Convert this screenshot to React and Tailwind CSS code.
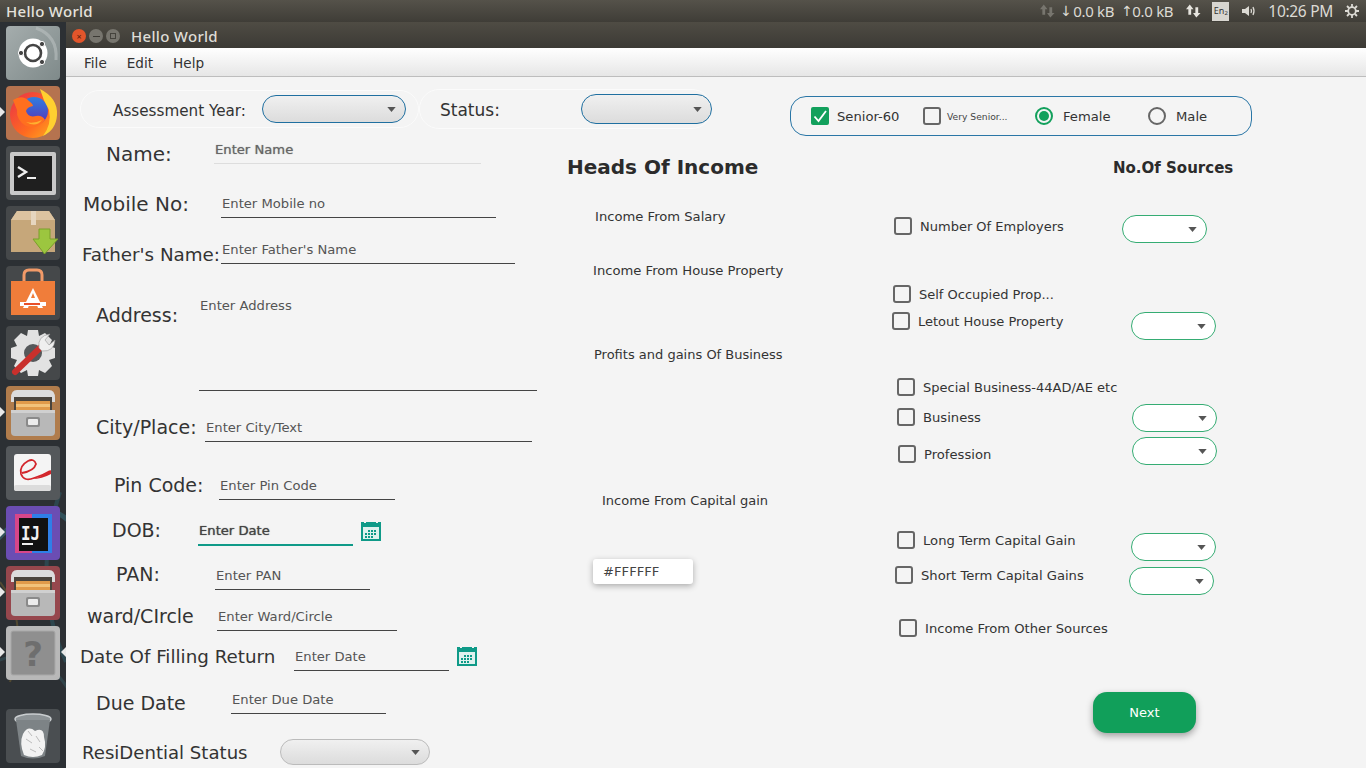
import React from 'react';

const SANS = "font-['DejaVu_Sans',sans-serif]";

function Tile({ bg, arrow, arrowRight, className = '', children }) {
  return (
    <div className={`relative w-[54px] h-[54px] ml-[6px] rounded-[4px] shrink-0 ${bg} ${className}`}>
      {arrow && <span className="absolute left-[-6px] top-[21px] border-y-[5px] border-y-transparent border-l-[5px] border-l-[#e8e8e8]" />}
      {arrowRight && <span className="absolute right-[-6px] top-[21px] border-y-[5px] border-y-transparent border-r-[5px] border-r-[#e8e8e8]" />}
      <svg viewBox="0 0 54 54" className="w-[54px] h-[54px]">{children}</svg>
    </div>
  );
}

function FilesIcon() {
  return (
    <g>
      <path d="M5 12 Q5 4 11 4 H43 Q49 4 49 12 V16 H5Z" fill="#dcdcdc" />
      <rect x="8" y="11" width="38" height="13" fill="#4a443c" />
      <rect x="10" y="15" width="34" height="9" fill="#e09a4a" />
      <rect x="10" y="18" width="34" height="3" fill="#f2c27a" />
      <path d="M5 24 H49 V46 Q49 50 45 50 H9 Q5 50 5 46Z" fill="#b8b8b8" />
      <rect x="5" y="24" width="44" height="3" fill="#d0d0d0" />
      <rect x="20" y="31" width="14" height="10" rx="2" fill="#8a8a8a" />
      <rect x="22" y="33" width="10" height="6" rx="1" fill="#ececec" />
    </g>
  );
}

function Launcher() {
  return (
    <div className="relative w-[66px] shrink-0 flex flex-col gap-[6px] pt-[4px] bg-[#2c3034] overflow-hidden">
      <svg viewBox="0 0 66 746" className="absolute inset-0 w-[66px] h-[746px]" fill="none">
        <path d="M-5 520 Q40 470 70 500" stroke="#35606b" strokeWidth="5" opacity="0.7" />
        <path d="M0 560 Q30 600 10 660" stroke="#6a5a30" strokeWidth="2" opacity="0.6" />
        <path d="M60 470 Q30 560 66 640" stroke="#2f5560" strokeWidth="4" opacity="0.6" />
        <path d="M-5 640 Q40 620 70 670" stroke="#35525a" strokeWidth="3" opacity="0.6" />
      </svg>
      <Tile bg="bg-gradient-to-br from-[#a5adad] to-[#7f8a8a]">
        <path d="M30 2 Q52 10 50 34" fill="none" stroke="#b9c0c0" strokeWidth="3" opacity="0.6" />
        <circle cx="27" cy="27" r="14.5" fill="#fff" />
        <circle cx="27" cy="27" r="8" fill="none" stroke="#444" strokeWidth="2.6" />
        <circle cx="36" cy="18" r="2.6" fill="#444" stroke="#fff" />
        <circle cx="36" cy="36" r="2.6" fill="#444" stroke="#fff" />
        <circle cx="15" cy="27" r="2.6" fill="#444" stroke="#fff" />
      </Tile>
      <Tile bg="bg-[#b5734f]" arrow>
        <defs>
          <linearGradient id="foxBall" x1="0" y1="0" x2="1" y2="1">
            <stop offset="0" stopColor="#e8304a" />
            <stop offset="0.6" stopColor="#ff6a20" />
            <stop offset="1" stopColor="#ffb020" />
          </linearGradient>
          <linearGradient id="foxGlobe" x1="0" y1="0" x2="0" y2="1">
            <stop offset="0" stopColor="#2f7fe0" />
            <stop offset="1" stopColor="#5a2fb5" />
          </linearGradient>
        </defs>
        <circle cx="27" cy="29" r="23" fill="url(#foxBall)" />
        <circle cx="28" cy="25" r="14" fill="url(#foxGlobe)" />
        <path d="M34 3 Q52 12 51 29 Q50 44 37 50 Q46 38 43 24 Q37 14 34 3Z" fill="#ffd030" />
        <path d="M7 14 Q16 8 23 15 Q27 18 27 20 Q21 21 20 25 Q22 32 30 30 Q36 29 39 34 Q31 44 20 40 Q10 34 11 24Z" fill="#ff6f1f" />
        <path d="M20 36 Q28 38 36 34 Q30 42 20 36Z" fill="#ffb030" />
      </Tile>
      <Tile bg="bg-[#4a4d4f]">
        <rect x="4" y="6" width="46" height="43" rx="2" fill="#c9c9c9" />
        <rect x="8" y="10" width="38" height="35" fill="#1f1f1f" />
        <path d="M12 21 L20 26 L12 31" fill="none" stroke="#eee" strokeWidth="2.4" />
        <rect x="21" y="31" width="9" height="2" fill="#eee" />
      </Tile>
      <Tile bg="bg-[#45484a]">
        <path d="M5 14 L11 5 H43 L49 14 V46 H5Z" fill="#c6a77a" />
        <path d="M5 14 L11 5 H43 L49 14Z" fill="#dcc3a0" />
        <rect x="25" y="5" width="5" height="14" fill="#e6d6bf" />
        <path d="M33 23 H44 V33 H52 L38.5 48 L27 33 H33Z" fill="#9cc63f" stroke="#7a9f2a" />
      </Tile>
      <Tile bg="bg-[#45484a]">
        <path d="M5 15 H49 V49 H5Z" fill="#f07d3a" />
        <path d="M18 15 V9 Q18 4 23 4 H31 Q36 4 36 9 V15" fill="none" stroke="#f29a68" strokeWidth="3" />
        <path d="M27 22 L37 42 H32 L30 36 H24 L22 42 H17Z M27 27 L25 32 H29Z" fill="#fff" fillRule="evenodd" />
        <rect x="14" y="36" width="26" height="4" fill="#fff" />
        <rect x="18" y="37" width="16" height="2" fill="#e8502a" />
      </Tile>
      <Tile bg="bg-[#45484a]">
        <path d="M22 4 H32 L33 10 L39 7 L46 14 L43 20 L49 22 V32 L43 34 L46 40 L39 47 L33 44 L32 50 H22 L21 44 L15 47 L8 40 L11 34 L5 32 V22 L11 20 L8 14 L15 7 L21 10Z" fill="#e2e2e2" />
        <circle cx="27" cy="27" r="9" fill="#55585a" />
        <path d="M9 46 L36 20" stroke="#c9302c" strokeWidth="6" strokeLinecap="round" />
        <path d="M33 22 Q31 10 44 8 L39 14 L43 19 L49 14 Q48 26 36 25Z" fill="#efefef" stroke="#999" strokeWidth="0.6" />
      </Tile>
      <Tile bg="bg-[#b07c4c]" arrow><FilesIcon /></Tile>
      <Tile bg="bg-[#54585b]">
        <rect x="8" y="8" width="37" height="37" rx="3" fill="#f4f4f4" />
        <rect x="8" y="39" width="37" height="6" rx="2" fill="#dcdcdc" />
        <path d="M16 27 Q28 25 30 18 Q28 12 22 15 Q13 20 15 28 Q18 36 28 32 Q36 30 44 25" fill="none" stroke="#d3262c" strokeWidth="1.8" />
        <path d="M26 33 Q36 31 45 24 V28 Q36 33 26 33Z" fill="#d3262c" />
      </Tile>
      <Tile bg="bg-[#6b4db3]" arrow>
        <path d="M9 8 H44 V47 H9Z" fill="#d8468a" />
        <path d="M26 8 H46 V47 H26Z" fill="#2f7fe8" />
        <rect x="13" y="12" width="29" height="33" fill="#111" />
        <rect x="16" y="37" width="11" height="2" fill="#eee" />
        <text x="15" y="34" fontSize="20" textLength="19" lengthAdjust="spacingAndGlyphs" fontWeight="700" fill="#f2f2f2" fontFamily="DejaVu Sans Mono, monospace">IJ</text>
      </Tile>
      <Tile bg="bg-[#96474d]" arrow><FilesIcon /></Tile>
      <Tile bg="bg-[#b8b8b8]" arrow arrowRight>
        <rect x="5" y="5" width="44" height="44" rx="2" fill="#8f8f8f" stroke="#a8a8a8" />
        <text x="27" y="40" textAnchor="middle" fontSize="34" fontWeight="700" fill="#6e6e6e" fontFamily="DejaVu Sans, sans-serif">?</text>
      </Tile>
      <Tile bg="bg-[#4a4e51]" className="mt-[23px]">
        <ellipse cx="27" cy="10" rx="18" ry="5" fill="#8d9396" stroke="#c9cdcf" strokeWidth="1.5" />
        <path d="M10 11 L15 47 Q27 52 39 47 L44 11" fill="#7d8386" />
        <path d="M17 25 Q22 16 29 22 Q38 18 38 28 Q41 38 36 46 Q27 50 18 46 Q13 34 17 25Z" fill="#f2f2f2" />
        <path d="M20 30 L26 34 M30 27 L34 33 M24 40 L30 43 M22 22 L26 27 M33 38 L37 42" stroke="#bbb" />
      </Tile>
    </div>
  );
}

function Caret({ className = '' }) {
  return (
    <svg viewBox="0 0 10 6" className={`w-[9px] h-[5px] ${className}`}>
      <polygon points="0,0 10,0 5,6" fill="#555" />
    </svg>
  );
}

function Select({ className }) {
  return <div className={`flex items-center justify-end shrink-0 rounded-full border pr-[9px] ${className}`}><Caret /></div>;
}

function GreenSelect({ className = '' }) {
  return <Select className={`w-[85px] h-[28px] bg-white border-[#35ac73] ${className}`} />;
}

function CheckBox({ checked }) {
  if (checked) {
    return (
      <span className="w-[18px] h-[18px] shrink-0 rounded-[2px] bg-[#12a05c] flex items-center justify-center">
        <svg viewBox="0 0 18 18" className="w-[18px] h-[18px]"><path d="M3.5 9.5 L7.5 14 L15 4" fill="none" stroke="#fff" strokeWidth="1.8" /></svg>
      </span>
    );
  }
  return <span className="w-[18px] h-[18px] shrink-0 rounded-[3px] border-2 border-[#666]" />;
}

function Field({ label, labelClass, boxClass, underline = 'border-[#444]', placeholder, textClass = 'text-[#555]', rowClass, after }) {
  return (
    <div className={`flex items-start h-[28px] ${rowClass}`}>
      <span className={`shrink-0 h-[26px] leading-[26px] whitespace-nowrap text-[#333] ${labelClass}`}>{label}</span>
      <div className={`h-[28px] border-b flex items-center pl-[1px] ${underline} ${boxClass}`}>
        <span className={`whitespace-nowrap text-[13.15px] ${textClass}`}>{placeholder}</span>
      </div>
      {after}
    </div>
  );
}

function Calendar({ className }) {
  return (
    <svg viewBox="0 0 20 20" className={`w-[20px] h-[20px] shrink-0 ${className}`}>
      <rect x="0" y="1" width="20" height="19" fill="#0f9a88" />
      <rect x="2" y="6" width="16" height="12" fill="#dff1ee" />
      <rect x="3" y="0" width="2" height="2" fill="#f4f4f4" />
      <rect x="15" y="0" width="2" height="2" fill="#f4f4f4" />
      <path d="M7 9h2v2H7zM10 9h2v2h-2zM13 9h2v2h-2zM4 12h2v2H4zM7 12h2v2H7zM10 12h2v2h-2zM13 12h2v2h-2zM4 15h2v2H4zM7 15h2v2H7zM10 15h2v2h-2z" fill="#0f9a88" />
    </svg>
  );
}

function SourceRow({ label, rowClass, blockClass, checkClass = '', textSize = 'text-[13.15px]', select }) {
  return (
    <div className={`flex items-start ${rowClass}`}>
      <div className={`flex items-center h-[18px] ${blockClass} ${checkClass}`}>
        <CheckBox />
        <span className={`ml-[8px] mt-[2px] text-[#333] whitespace-nowrap ${textSize}`}>{label}</span>
      </div>
      {select}
    </div>
  );
}

export default function App() {
  return (
    <div className={`w-[1366px] h-[768px] overflow-hidden flex flex-col ${SANS}`}>
      <div className="h-[22px] shrink-0 flex items-center bg-gradient-to-b from-[#55524a] to-[#3f3d37] text-[#e4e2dc] font-['Noto_Sans',sans-serif]">
        <span className="ml-[6px] text-[15px] font-medium tracking-[0.3px]">Hello World</span>
        <div className="ml-auto flex items-center text-[15px] tracking-[-0.3px] text-[#dcdad4]">
          <svg viewBox="0 0 16 14" className="w-[15px] h-[14px] mr-[5px]" fill="#77756e"><path d="M4 0 L8 5 H5.5 V11 H2.5 V5 H0Z" /><path d="M11 14 L7.5 9 H10 V3 H13 V9 H15.5Z" /></svg>
          <span className="w-[13px] text-[14px] font-['DejaVu_Sans',sans-serif]">↓</span>
          <span>0.0 kB</span>
          <span className="ml-[7px] w-[11px] text-[14px] font-['DejaVu_Sans',sans-serif]">↑</span>
          <span>0.0 kB</span>
          <svg viewBox="0 0 16 14" className="w-[15px] h-[14px] ml-[13px]" fill="#e6e4de"><path d="M4 0 L8 5 H5.5 V11 H2.5 V5 H0Z" /><path d="M11 14 L7.5 9 H10 V3 H13 V9 H15.5Z" /></svg>
          <span className="ml-[11px] w-[17px] h-[19px] bg-[#d8d6d0] text-[#333] text-[9px] leading-[18px] text-center tracking-normal">En<sub className="text-[6px]">2</sub></span>
          <svg viewBox="0 0 16 14" className="w-[16px] h-[14px] ml-[12px]" fill="none" stroke="#dcdad4"><path d="M1 5 H4 L8 2 V12 L4 9 H1Z" fill="#dcdad4" stroke="none" /><path d="M10 5 Q11 7 10 9 M12 3 Q14 7 12 11" strokeWidth="1.3" /></svg>
          <span className="ml-[11px] mt-[1px] text-[15.5px]">10:26 PM</span>
          <svg viewBox="0 0 14 14" className="w-[14px] h-[14px] ml-[12px] mr-[7px]" fill="none" stroke="#dcdad4" strokeWidth="1.8"><circle cx="7" cy="7" r="3.8" /><path d="M7 0 V3 M7 11 V14 M0 7 H3 M11 7 H14 M2 2 L4 4 M10 10 L12 12 M12 2 L10 4 M4 10 L2 12" /></svg>
        </div>
      </div>

      <div className="flex flex-1 min-h-0">
        <Launcher />
        <div className="flex-1 min-w-0 flex flex-col bg-[#f4f4f4]">
          <div className="h-[26px] shrink-0 flex items-center pt-[2px] bg-gradient-to-b from-[#4f4c44] to-[#3c3a35] font-['Noto_Sans',sans-serif]">
            <span className="ml-[6px] w-[14px] h-[14px] rounded-full bg-[#e2552b] flex items-center justify-center text-[9px] leading-none text-[#5a1d0a]">×</span>
            <span className="ml-[3px] w-[14px] h-[14px] rounded-full bg-[#77756e] flex items-center justify-center"><span className="w-[7px] h-[1px] bg-[#3c3a35]" /></span>
            <span className="ml-[3px] w-[14px] h-[14px] rounded-full bg-[#77756e] flex items-center justify-center"><span className="w-[6px] h-[6px] border border-[#45433d]" /></span>
            <span className="ml-[11px] text-[15px] font-medium tracking-[0.3px] text-[#dfddd7]">Hello World</span>
          </div>
          <div className="h-[29px] shrink-0 flex items-center pt-[2px] bg-gradient-to-b from-[#ffffff] to-[#e6e6e6] border-b border-[#bdbdbd] text-[13.6px] text-[#333]">
            <span className="ml-[18px]">File</span>
            <span className="ml-[20px]">Edit</span>
            <span className="ml-[20px]">Help</span>
          </div>

          <div className="h-[59px] shrink-0 flex items-start">
            <div className="ml-[14px] mt-[13px] w-[339px] h-[38px] rounded-[19px] border border-[#fbfbfb] flex items-center pl-[32px]">
              <span className="w-[149px] shrink-0 mt-[4px] text-[15.2px] text-[#333]">Assessment Year:</span>
              <Select className="w-[144px] h-[28px] bg-gradient-to-b from-[#f0f0f0] to-[#dcdcdc] border-[#1f6fa0]" />
            </div>
            <div className="mt-[12px] w-[293px] h-[40px] rounded-[20px] border border-[#fbfbfb] flex items-center pl-[20px]">
              <span className="w-[141px] shrink-0 mt-[4px] text-[17px] text-[#333]">Status:</span>
              <Select className="w-[131px] h-[30px] bg-gradient-to-b from-[#f0f0f0] to-[#dcdcdc] border-[#1f6fa0]" />
            </div>
            <div className="ml-[78px] mt-[19px] w-[462px] h-[40px] rounded-[16px] border border-[#2a76a6] flex items-center pl-[20px]">
              <div className="w-[112px] flex items-center">
                <CheckBox checked />
                <span className="ml-[8px] mt-[2px] text-[13.15px] text-[#333]">Senior-60</span>
              </div>
              <div className="w-[112px] flex items-center">
                <CheckBox />
                <span className="ml-[6px] mt-[2px] text-[9.2px] text-[#444] whitespace-nowrap">Very Senior...</span>
              </div>
              <div className="w-[113px] flex items-center">
                <span className="w-[18px] h-[18px] rounded-full border-2 border-[#12a05c] flex items-center justify-center"><span className="w-[10px] h-[10px] rounded-full bg-[#12a05c]" /></span>
                <span className="ml-[10px] mt-[2px] text-[13.15px] text-[#333]">Female</span>
              </div>
              <div className="flex items-center">
                <span className="w-[18px] h-[18px] rounded-full border-2 border-[#666]" />
                <span className="ml-[10px] mt-[2px] text-[13.15px] text-[#333]">Male</span>
              </div>
            </div>
          </div>

          <div className="flex-1 min-h-0 flex items-start">
            <div className="w-[494px] shrink-0 flex flex-col">
              <Field rowClass="" label="Name:" labelClass="w-[148px] pl-[40px] mt-[5px] text-[20px]" boxClass="w-[267px]" underline="border-[#ddd]" textClass="text-[#666] [text-shadow:0_0_1px_#888]" placeholder="Enter Name" />
              <Field rowClass="mt-[26px]" label="Mobile No:" labelClass="w-[155px] pl-[17px] mt-[1px] text-[20px]" boxClass="w-[275px]" placeholder="Enter Mobile no" />
              <Field rowClass="mt-[18px]" label="Father's Name:" labelClass="w-[155px] pl-[16px] mt-[6px] text-[18.3px]" boxClass="w-[294px]" placeholder="Enter Father's Name" />
              <div className="mt-[27px] flex items-start h-[100px]">
                <span className="shrink-0 w-[133px] pl-[30px] mt-[10px] h-[28px] leading-[28px] text-[19px] text-[#333]">Address:</span>
                <div className="w-[338px] h-[100px] border-b border-[#444] pl-[1px] pt-[2px]">
                  <span className="text-[13.15px] text-[#555]">Enter Address</span>
                </div>
              </div>
              <Field rowClass="mt-[23px]" label="City/Place:" labelClass="w-[139px] pl-[30px] text-[19px]" boxClass="w-[327px]" placeholder="Enter City/Text" />
              <Field rowClass="mt-[30px]" label="Pin Code:" labelClass="w-[153px] pl-[48px] text-[19px]" boxClass="w-[176px]" placeholder="Enter Pin Code" />
              <Field
                rowClass="mt-[18px]"
                label="DOB:"
                labelClass="w-[132px] pl-[46px] -mt-[1px] text-[19px]"
                boxClass="w-[155px] border-b-2"
                underline="border-[#0f9a88]"
                textClass="text-[#444] [text-shadow:0_0_1px_#555]"
                placeholder="Enter Date"
                after={<Calendar className="ml-[8px] mt-[3px]" />}
              />
              <Field rowClass="mt-[16px]" label="PAN:" labelClass="w-[149px] pl-[50px] -mt-[1px] text-[19px]" boxClass="w-[155px]" placeholder="Enter PAN" />
              <Field rowClass="mt-[13px]" label="ward/CIrcle" labelClass="w-[151px] pl-[21px] text-[19px]" boxClass="w-[180px]" placeholder="Enter Ward/Circle" />
              <Field
                rowClass="mt-[12px]"
                label="Date Of Filling Return"
                labelClass="w-[228px] pl-[14px] mt-[1px] text-[18.3px]"
                boxClass="w-[155px]"
                placeholder="Enter Date"
                after={<Calendar className="ml-[8px] mt-[3px]" />}
              />
              <Field rowClass="mt-[15px]" label="Due Date" labelClass="w-[165px] pl-[30px] mt-[4px] text-[19px]" boxClass="w-[155px]" placeholder="Enter Due Date" />
              <div className="mt-[25px] flex items-center h-[26px]">
                <span className="w-[214px] pl-[16px] mt-[2px] text-[18.1px] text-[#333] whitespace-nowrap">ResiDential Status</span>
                <Select className="w-[150px] h-[26px] bg-gradient-to-b from-[#f0f0f0] to-[#dcdcdc] border-[#bbb]" />
              </div>
            </div>

            <div className="w-[320px] shrink-0 flex flex-col text-[13.15px] text-[#333] leading-[18px]">
              <span className="ml-[7px] mt-[17px] h-[28px] leading-[28px] text-[20px] font-bold text-[#2b2b2b] whitespace-nowrap">Heads Of Income</span>
              <span className="ml-[35px] mt-[27px]">Income From Salary</span>
              <span className="ml-[33px] mt-[36px]">Income From House Property</span>
              <span className="ml-[34px] mt-[66px] text-[13px]">Profits and gains Of Business</span>
              <span className="ml-[42px] mt-[128px] text-[13px]">Income From Capital gain</span>
              <div className="ml-[33px] mt-[49px] w-[100px] h-[25px] pl-[10px] flex items-center bg-white rounded-[3px] shadow-[0_2px_6px_rgba(0,0,0,0.3)] text-[#444]">#FFFFFF</div>
            </div>

            <div className="flex-1 min-w-0 flex flex-col">
              <span className="ml-[233px] mt-[20px] h-[24px] leading-[24px] text-[15px] font-bold text-[#2b2b2b] whitespace-nowrap">No.Of Sources</span>
              <SourceRow rowClass="ml-[14px] mt-[35px] h-[28px]" blockClass="w-[228px]" checkClass="mt-[2px]" textSize="text-[13px]" label="Number Of Employers" select={<GreenSelect />} />
              <SourceRow rowClass="ml-[13px] mt-[42px] h-[18px]" blockClass="" textSize="text-[13px]" label="Self Occupied Prop..." />
              <SourceRow rowClass="ml-[12px] mt-[9px] h-[28px]" blockClass="w-[239px]" textSize="text-[13px]" label="Letout House Property" select={<GreenSelect />} />
              <SourceRow rowClass="ml-[17px] mt-[38px] h-[18px]" blockClass="" textSize="text-[13px]" label="Special Business-44AD/AE etc" />
              <SourceRow rowClass="ml-[17px] mt-[8px] h-[28px]" blockClass="w-[235px]" checkClass="mt-[4px]" label="Business" select={<GreenSelect />} />
              <SourceRow rowClass="ml-[18px] mt-[5px] h-[28px]" blockClass="w-[234px]" checkClass="mt-[8px]" label="Profession" select={<GreenSelect />} />
              <SourceRow rowClass="ml-[17px] mt-[66px] h-[30px]" blockClass="w-[234px]" label="Long Term Capital Gain" select={<GreenSelect className="mt-[2px]" />} />
              <SourceRow rowClass="ml-[15px] mt-[5px] h-[29px]" blockClass="w-[234px]" label="Short Term Capital Gains" select={<GreenSelect className="mt-[1px]" />} />
              <SourceRow rowClass="ml-[19px] mt-[24px] h-[18px]" blockClass="" label="Income From Other Sources" />
              <button type="button" className="ml-[213px] mt-[55px] w-[103px] h-[41px] rounded-[14px] bg-[#119f5a] text-white text-[13px] shadow-[0_3px_7px_rgba(0,0,0,0.35)]">Next</button>
            </div>
          </div>
        </div>
      </div>
    </div>
  );
}
